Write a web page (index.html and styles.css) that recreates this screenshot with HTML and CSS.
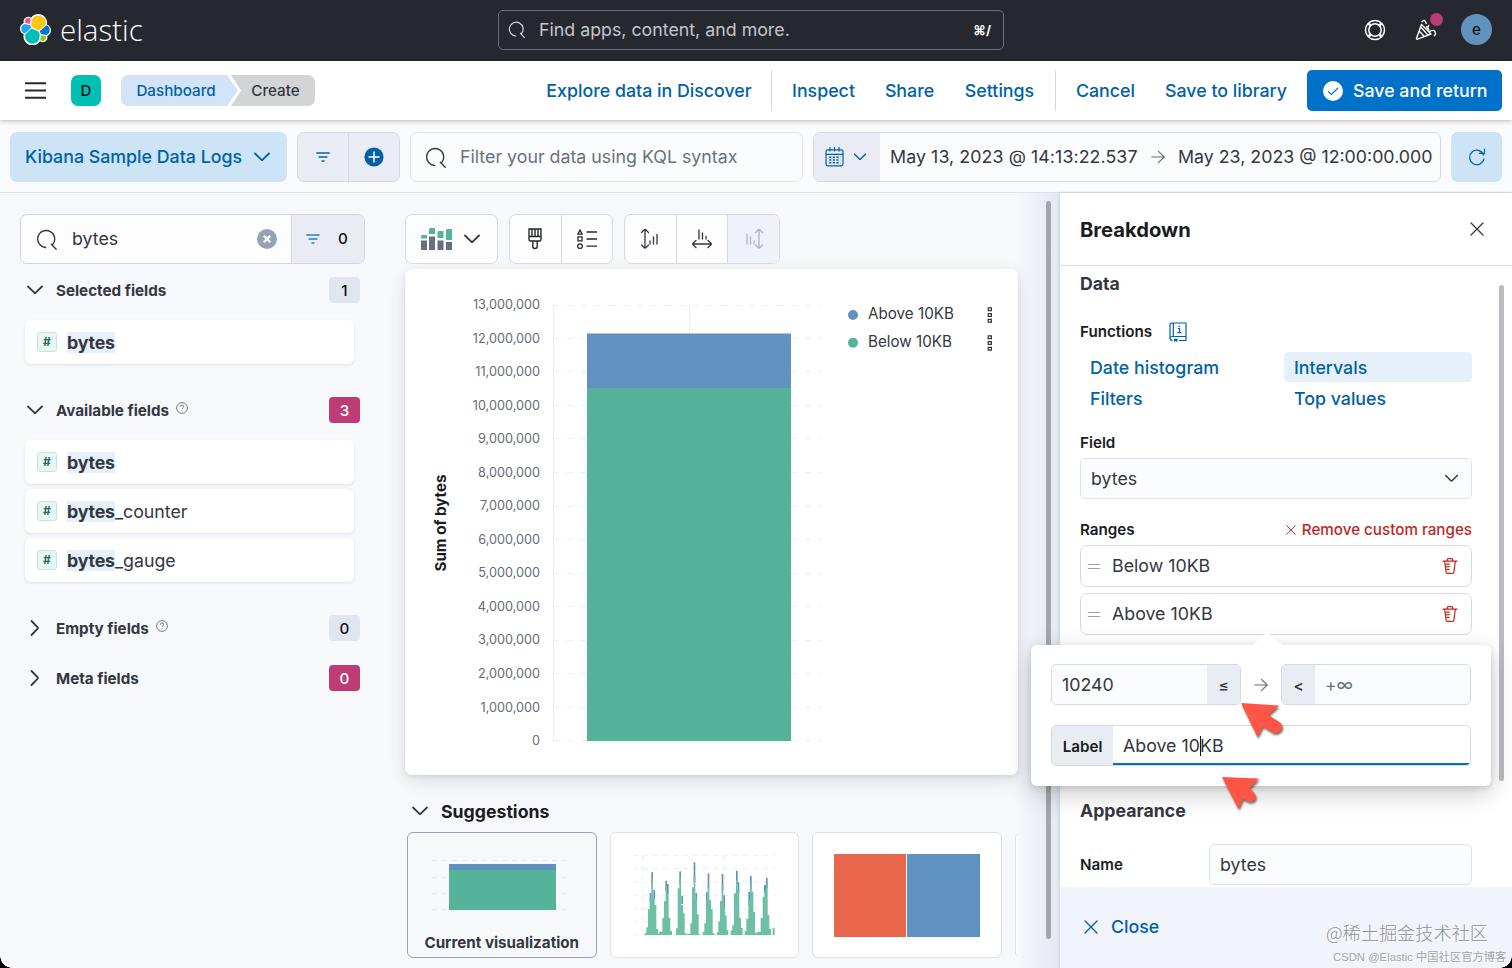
FILE: index.html
```html
<!DOCTYPE html>
<html lang="en">
<head>
<meta charset="utf-8">
<title>Create - Elastic</title>
<link rel="stylesheet" href="styles.css">
</head>
<body>
<svg class="defs" width="0" height="0">
  <symbol id="search" viewBox="0 0 20 20"><path d="M9.200 17.600A8.100 8.100 0 1 1 16 14.600M14.600 14.600l4.600 4.600" fill="none" stroke="currentColor" stroke-width="1.300" stroke-linecap="round"/></symbol>
  <symbol id="down" viewBox="0 0 18 18"><path d="M2 5.500l6.300 6.200q.7.6 1.400 0L16 5.500" fill="none" stroke="currentColor" stroke-width="1.800" stroke-linecap="round"/></symbol>
  <symbol id="right" viewBox="0 0 18 18"><path d="M5.500 2l6.200 6.300q.6.7 0 1.400L5.500 16" fill="none" stroke="currentColor" stroke-width="1.800" stroke-linecap="round"/></symbol>
  <symbol id="filter" viewBox="0 0 14 12"><path d="M.8 2h12.400M3 6h8M6 10h2" fill="none" stroke="currentColor" stroke-width="1.300" stroke-linecap="round"/></symbol>
  <symbol id="cross" viewBox="0 0 14 14"><path d="M1 1l12 12M13 1L1 13" fill="none" stroke="currentColor" stroke-width="1.300" stroke-linecap="round"/></symbol>
  <symbol id="arrow" viewBox="0 0 14 14"><path d="M.8 7H13M7.500 1.300L13.200 7l-5.700 5.700" fill="none" stroke="currentColor" stroke-width="1.200" stroke-linecap="round" stroke-linejoin="round"/></symbol>
  <symbol id="help" viewBox="0 0 12 12"><circle cx="6" cy="6" r="5.400" fill="none" stroke="currentColor" stroke-width=".9"/><path d="M4.300 4.700Q4.400 3 6 3t1.700 1.500Q7.700 5.300 6.900 5.800 6 6.300 6 7.200M6 8.300v1" fill="none" stroke="currentColor" stroke-width=".9"/></symbol>
  <symbol id="trash" viewBox="0 0 16 16"><path d="M1 3.200h14M5.300 3V1.700q0-1 1-1h3.400q1 0 1 1V3M2.700 3.500l1.400 10.600q.2 1.200 1.400 1.200h5q1.200 0 1.400-1.200l1.400-10.600M4.300 6.200h3M4.700 8.700h2.500M5 11.300h2.200" fill="none" stroke="currentColor" stroke-width="1.200" stroke-linecap="round"/></symbol>
  <symbol id="pointer" viewBox="0 0 44 38"><path d="M1 1l38 2.500-10.500 9.500 11.500 7.500c5 4 1 11.500-6.500 10.500L23 24.500 17.500 35z" fill="#ff5547"/></symbol>
  <symbol id="boxes" viewBox="0 0 6 16"><path d="M1.200.8h3.200v2.800H1.200zM1.200 6.600h3.200v2.800H1.200zM1.200 12.400h3.200v2.800H1.200z" fill="none" stroke="#343741" stroke-width="1.200"/></symbol>
</svg>

<header class="top">
  <div class="brand">
    <svg width="31" height="31" viewBox="0 0 32 32"><path fill="#fff" d="M32 16.770c0-2.680-1.660-5.020-4.160-5.930a8.900 8.900 0 0 0 .16-1.700C28 4.100 23.900 0 18.870 0c-2.940 0-5.660 1.400-7.390 3.770a4.800 4.800 0 0 0-2.950-1 4.860 4.860 0 0 0-4.570 6.500A6.360 6.360 0 0 0 0 15.200c0 2.700 1.680 5.040 4.170 5.950-.11.55-.17 1.120-.17 1.700A9.130 9.130 0 0 0 20.490 28.200c.84.65 1.870 1.010 2.940 1.010a4.860 4.860 0 0 0 4.570-6.500A6.370 6.370 0 0 0 32 16.770"/><path fill="#fff" d="M4 20.500A9.130 9.130 0 0 0 20.500 28z"/><path fill="#fec514" d="M12.580 13.787l7.002 3.211 7.066-6.213a7.849 7.849 0 0 0 .152-1.557c0-4.287-3.464-7.773-7.722-7.773a7.718 7.718 0 0 0-6.375 3.392l-1.180 6.120z"/><path fill="#00bfb3" d="M5.333 21.215A7.950 7.950 0 0 0 5.178 22.800c0 4.300 3.477 7.794 7.754 7.794a7.760 7.760 0 0 0 6.400-3.411l1.167-6.085-1.556-2.975-7.030-3.206z"/><path fill="#f04e98" d="M5.288 9.067l4.800 1.135L11.140 4.738a3.785 3.785 0 0 0-6.062 3.026c0 .451.08.889.21 1.303z"/><path fill="#1ba9f5" d="M4.872 10.211A5.386 5.386 0 0 0 1.310 15.264c0 2.252 1.390 4.262 3.478 5.053l6.733-6.096-1.236-2.644z"/><path fill="#93c90e" d="M20.870 27.182a3.762 3.762 0 0 0 2.284.785 3.790 3.790 0 0 0 3.581-5.032l-4.797-1.125z"/><path fill="#07c" d="M21.848 20.563l5.280 1.238a5.387 5.387 0 0 0 3.560-5.054 5.377 5.377 0 0 0-3.466-5.042l-6.906 6.060z"/></svg>
    <span class="wordmark">elastic</span>
  </div>
  <div class="global-search">
    <svg width="17" height="17"><use href="#search"/></svg>
    <span class="grow">Find apps, content, and more.</span>
    <b class="kbd">⌘/</b>
  </div>
  <div class="top-icons">
    <svg width="22" height="22" viewBox="0 0 22 22" fill="none" stroke="#fff" stroke-width="1.500"><circle cx="11" cy="11" r="9.500"/><circle cx="11" cy="11" r="6.200"/><path stroke-width="2.600" d="M4.700 4.700l2 2M17.300 4.700l-2 2M4.700 17.300l2-2M17.300 17.300l-2-2"/></svg>
    <div class="news">
      <svg width="22" height="22" viewBox="0 0 22 22" fill="none" stroke="#fff" stroke-width="1.400" stroke-linecap="round" stroke-linejoin="round"><path d="M6.500 5.500L1.500 19.300q-.1 1 1 .9L16 15zM4.700 12.500l4.500 5M6 8.300l7 7.800M7 2.700q3-3 4.200 1.800M12.500 9.500l1.200-3M14.500 12.500q6-3.300 6 2.700l-1 1.500M11.500 7.700l2.500 3"/></svg>
      <i class="dot"></i>
    </div>
    <span class="avatar">e</span>
  </div>
</header>

<nav class="bar">
  <svg width="21" height="17" viewBox="0 0 21 17"><path d="M0 1.300h21M0 8.500h21M0 15.700h21" stroke="#25282f" stroke-width="2.100"/></svg>
  <span class="space">D</span>
  <div class="crumbs"><span class="crumb first">Dashboard</span><span class="crumb last">Create</span></div>
  <span class="grow"></span>
  <div class="links">
    <a class="w-explore">Explore data in Discover</a><i class="rule"></i>
    <a class="w-inspect">Inspect</a><a class="w-share">Share</a><a class="w-settings">Settings</a><i class="rule"></i>
    <a class="w-cancel">Cancel</a><a class="w-library">Save to library</a>
  </div>
  <div class="save"><svg width="20" height="20" viewBox="0 0 20 20"><circle cx="10" cy="10" r="10" fill="#fff"/><path d="M5 10.200l3.300 3.300L15 7" fill="none" stroke="#0071c2" stroke-width="1.200"/></svg><span>Save and return</span></div>
</nav>

<section class="query">
  <div class="dataview"><span>Kibana Sample Data Logs</span><svg width="18" height="18"><use href="#down"/></svg></div>
  <div class="filters"><span><svg width="14" height="12"><use href="#filter"/></svg></span><span><svg width="20" height="20" viewBox="0 0 20 20"><circle cx="10" cy="10" r="9.600" fill="#0061a6"/><path d="M10 4.500v11M4.500 10h11" stroke="#fff" stroke-width="1.500"/></svg></span></div>
  <div class="kql"><svg width="21" height="21"><use href="#search"/></svg><span>Filter your data using KQL syntax</span></div>
  <div class="dates">
    <span class="quick"><svg width="19" height="20" viewBox="0 0 19 20" fill="none" stroke="#0061a6" stroke-width="1.200"><rect x="1" y="2.800" width="17" height="16" rx="1.800"/><path d="M1 7.300h17M5 0v4.500M9.500 0v4.500M14 0v4.500"/><path stroke-width="1.600" stroke-dasharray="2.200 1.400" d="M4.200 10.200h11M4.200 13h11M4.200 15.800h11"/></svg><svg width="14" height="14"><use href="#down"/></svg></span>
    <span class="from">May 13, 2023 @ 14:13:22.537</span>
    <svg class="to-arrow" width="14" height="14"><use href="#arrow"/></svg>
    <span class="to">May 23, 2023 @ 12:00:00.000</span>
  </div>
  <div class="refresh"><svg width="18" height="18" viewBox="0 0 18 18" fill="none" stroke="#0061a6" stroke-width="1.200"><path d="M15.800 7.500A7.200 7.200 0 1 0 16 10.500M11 5.300h5.500V.8"/></svg></div>
</section>

<main class="main">
  <aside class="fields">
    <div class="field-search">
      <svg width="21" height="21"><use href="#search"/></svg><span class="grow">bytes</span>
      <svg width="20" height="20" viewBox="0 0 20 20"><circle cx="10" cy="10" r="10" fill="#98a2b3"/><path d="M6.800 6.800l6.400 6.400M13.200 6.800l-6.400 6.400" stroke="#fff" stroke-width="2.300"/></svg>
      <div class="field-filter"><svg width="14" height="12"><use href="#filter"/></svg><b>0</b></div>
    </div>
    <div class="group g1"><svg width="18" height="18"><use href="#down"/></svg><h4>Selected fields</h4><span class="count">1</span></div>
    <div class="card"><i class="token">#</i><span><mark>bytes</mark></span></div>
    <div class="group g2"><svg width="18" height="18"><use href="#down"/></svg><h4>Available fields</h4><svg class="q" width="12" height="12"><use href="#help"/></svg><span class="count pink">3</span></div>
    <div class="card"><i class="token">#</i><span><mark>bytes</mark></span></div>
    <div class="card"><i class="token">#</i><span><mark>bytes</mark>_counter</span></div>
    <div class="card"><i class="token">#</i><span><mark>bytes</mark>_gauge</span></div>
    <div class="group g3"><svg width="18" height="18"><use href="#right"/></svg><h4>Empty fields</h4><svg class="q" width="12" height="12"><use href="#help"/></svg><span class="count">0</span></div>
    <div class="group g4"><svg width="18" height="18"><use href="#right"/></svg><h4>Meta fields</h4><span class="count pink">0</span></div>
  </aside>

  <section class="workspace">
    <div class="tools">
      <div class="tool chart-type">
        <svg width="32" height="24" viewBox="0 0 32 24"><path fill="#54b399" d="M1 9.500q0-1.500 1.500-1.500H7v3.500H1zM9 2.500Q9 1 10.500 1H15v6H9zM17.500 5.500q0-1.500 1.500-1.500h4.500v7h-6zM26 3.500Q26 2 27.500 2H32v11h-6z"/><path fill="#69707d" d="M1 13.500h6V23H1zM9 9.500h6V23H9zM17.500 13.500h6V23h-6zM26 15h6v8h-6z"/></svg>
        <svg width="18" height="18"><use href="#down"/></svg>
      </div>
      <div class="tool">
        <span><svg width="16" height="22" viewBox="0 0 16 22" fill="none" stroke="#25282f" stroke-width="1.400"><path d="M2 1h12v10.500q0 1.500-1.500 1.500h-9Q2 13 2 11.500zM2 8.500h12M5 1v7.500M8 1v7.500M11 1v7.500M5.800 13v5.500q0 2 2.200 2t2.200-2V13"/></svg></span>
        <span><svg width="20" height="20" viewBox="0 0 20 20" fill="none" stroke="#25282f" stroke-width="1.300"><path d="M3 1L.9 5.200h4.200zM1 7.900h4v4H1zM9.500 3H20M9.500 10H20M9.500 17.200H20"/><circle cx="3" cy="17.200" r="2.300"/></svg></span>
      </div>
      <div class="tool axes">
        <span><svg width="20" height="22" viewBox="0 0 20 22" fill="none" stroke="#343741" stroke-width="1.300" stroke-linecap="round"><path d="M5 1.500v18.500M1.500 4.500l2.500-2.500q1-1 2 0l2.500 2.500M1.500 17l2.500 2.500q1 1 2 0l2.500-2.500M10 16v-3M13.500 16v-7M17 16V6.500"/></svg></span>
        <span><svg width="22" height="20" viewBox="0 0 22 20" fill="none" stroke="#343741" stroke-width="1.300" stroke-linecap="round"><path d="M2 15h18M5 11.500L2 14.200q-.8.800 0 1.600L5 18.500M17 11.500l3 2.700q.8.800 0 1.600l-3 2.700M8 10V1M11.500 10V4M15 10V7.500"/></svg></span>
        <span class="off"><svg width="20" height="22" viewBox="0 0 20 22" fill="none" stroke="#abb4c4" stroke-width="1.300" stroke-linecap="round"><path d="M15 1.500v18.500M11.500 4.500L14 2q1-1 2 0l2.500 2.500M11.500 17l2.500 2.500q1 1 2 0l2.500-2.500M10 16v-3M6.500 16v-7M3 16V6.500"/></svg></span>
      </div>
    </div>

    <div class="chart">
      <svg width="613" height="506" viewBox="0 0 613 506">
        <path d="M148 36.500h269M148 69.500h269M148 102.500h269M148 136.500h269M148 169.500h269M148 203.500h269M148 237.500h269M148 270.500h269M148 304.500h269M148 337.500h269M148 371.500h269M148 404.500h269M148 438.500h269M148 471.500h269" stroke="#e9ecf1" stroke-dasharray="6 8"/>
        <path d="M148.500 36v436M284.500 36v29" stroke="#eaecf1" fill="none"/>
        <rect x="182" y="64.500" width="204" height="55" fill="#6092c0"/>
        <rect x="182" y="119" width="204" height="353" fill="#54b399"/>
        <g class="ticks" text-anchor="end">
          <text x="135" y="40">13,000,000</text><text x="135" y="73.500">12,000,000</text><text x="135" y="107">11,000,000</text><text x="135" y="140.600">10,000,000</text><text x="135" y="174">9,000,000</text><text x="135" y="207.700">8,000,000</text><text x="135" y="241">7,000,000</text><text x="135" y="274.700">6,000,000</text><text x="135" y="308.400">5,000,000</text><text x="135" y="341.800">4,000,000</text><text x="135" y="375.400">3,000,000</text><text x="135" y="409">2,000,000</text><text x="135" y="442.500">1,000,000</text><text x="135" y="476">0</text>
        </g>
        <text class="axis-title" transform="translate(41 254) rotate(-90)" text-anchor="middle">Sum of bytes</text>
        <circle cx="448" cy="46" r="5" fill="#6092c0"/><circle cx="448" cy="73.700" r="5" fill="#54b399"/>
        <text class="legend" x="463" y="50">Above 10KB</text><text class="legend" x="463" y="78">Below 10KB</text>
        <use href="#boxes" x="582" y="38" width="6" height="16"/><use href="#boxes" x="582" y="66" width="6" height="16"/>
      </svg>
    </div>

    <div class="sugg-title"><svg width="18" height="18"><use href="#down"/></svg><h3>Suggestions</h3></div>
    <div class="suggestions">
      <div class="sugg current">
        <svg width="140" height="56" viewBox="0 0 140 56"><path d="M0 4.500h140M0 21.500h140M0 37.500h140M0 53.500h140" stroke="#e6eaf0" stroke-dasharray="5 5"/><rect x="17" y="8" width="107" height="46" fill="#54b399"/><rect x="17" y="8" width="107" height="6" fill="#6092c0"/></svg>
        <b>Current visualization</b>
      </div>
      <div class="sugg">
        <svg width="142" height="84" viewBox="700 222 426 252"><path d="M700 227h426M700 266h426M700 306h426M700 346h426M700 386h426M700 425h426M700 465h426M729 227v238M974 227v238" stroke="#e9ecf1" stroke-width="3" stroke-dasharray="15 15" fill="none"/>
          <g fill="#6092c0"><path d="M755 277h5v40h-5zM750 339h5v30h-5zM761 330h5v30h-5zM797 302h5v30h-5zM802 312h5v30h-5zM839 274h5v40h-5zM845 347h5v25h-5zM882 247h5v60h-5zM887 339h5v20h-5zM924 280h5v45h-5zM919 337h5v30h-5zM966 282h5v50h-5zM971 346h5v35h-5zM1009 272h5v40h-5zM1014 307h5v30h-5zM1051 288h5v40h-5zM1046 336h5v40h-5zM1099 294h5v30h-5zM1093 315h6v25h-6z"/></g>
          <g fill="#6dbfa5"><path d="M735 465v-5h5v-18h5v-54h5v-35h5v-60h5v60h5v22h5v72h5v14h5v4z"/><path d="M778 465v-10h10v-41h5v-51h5v-45h4v20h5v75h5v40h5v12z"/><path d="M829 465v-20h5v-120h5v-30h5v80h6v25h5v60h5v5z"/><path d="M862 465v-4h10v-31h5v-108h5v-35h5v73h5v43h5v60h5v2z"/><path d="M909 465v-10h5v-25h5v-70h5v-45h5v45h5v27h5v73h5v5z"/><path d="M951 465v-8h5v-33h5v-61h5v-45h5v60h5v28h5v44h5v15z"/><path d="M993 465v-14h5v-15h5v-96h6v-40h5v30h5v84h5v30h5v21z"/><path d="M1035 465v-12h5v-37h6v-56h5v-45h5v20h5v61h5v62h5v7z"/><path d="M1071 465v-9h12v-42h6v-64h5v-20h5v-15h5v90h5v42h5v18zM1119 465v-22h6v22z"/></g>
        </svg>
      </div>
      <div class="sugg split"><i class="tile red"></i><i class="tile blue"></i></div>
      <div class="sugg"></div>
    </div>
    <i class="scroll"></i>
  </section>

  <aside class="flyout">
    <div class="fly-head"><h2>Breakdown</h2><svg width="14" height="14"><use href="#cross"/></svg></div>
    <div class="fly-body">
      <h3 class="data">Data</h3>
      <div class="label functions"><span>Functions</span><svg width="18" height="20" viewBox="0 0 18 20" fill="none" stroke="#0061a6" stroke-width="1.200"><path d="M3.300 1H17v13.500H3.300M3.300 1Q1 1 1 3v13q0 2.300 2.500 2.300M1 16q.3-1.500 2.300-1.500M10 18.500h7v-4M4.300 1v13.500"/><path d="M8.700 6.500h1.800v4M8.400 10.700h4M9.500 4.300h1.500"/><path d="M5 16.800h3.500V20L6.700 19 5 20z" fill="#0061a6" stroke="none"/></svg></div>
      <div class="fn-grid"><a>Date histogram</a><a class="picked">Intervals</a><a>Filters</a><a>Top values</a></div>
      <div class="label field">Field</div>
      <div class="select"><span>bytes</span><svg width="15" height="15"><use href="#down"/></svg></div>
      <div class="label ranges"><span>Ranges</span><span class="remove"><svg width="10" height="10"><use href="#cross"/></svg>Remove custom ranges</span></div>
      <div class="range"><i class="grab"></i><span class="grow">Below 10KB</span><svg width="16" height="16"><use href="#trash"/></svg></div>
      <div class="range"><i class="grab"></i><span class="grow">Above 10KB</span><svg width="16" height="16"><use href="#trash"/></svg></div>
      <h3 class="appearance">Appearance</h3>
      <div class="name-row"><span class="label">Name</span><span class="input">bytes</span></div>
      <i class="fly-scroll"></i>
    </div>
    <div class="fly-foot"><svg width="14" height="14"><use href="#cross"/></svg><span>Close</span></div>
  </aside>
</main>

<div class="popover">
  <i class="tip"></i>
  <div class="pop-row">
    <div class="num"><span class="grow">10240</span><b>≤</b></div>
    <svg width="14" height="14"><use href="#arrow"/></svg>
    <div class="num upper"><b>&lt;</b><span class="inf">+∞</span></div>
  </div>
  <div class="label-input"><b>Label</b><span>Above 10<i class="caret"></i>KB</span></div>
</div>
<svg class="pointer p1" width="44" height="38"><use href="#pointer"/></svg>
<svg class="pointer p2" width="38" height="38" viewBox="0 0 38 38"><path d="M1 1l37 1.500-9.500 9.500 5 5.500c4 5-1 9.500-6 8l-5.500-2.500L17.500 33z" fill="#ff5547"/></svg>
<div class="mark1">@稀土掘金技术社区</div>
<div class="mark2">CSDN @Elastic 中国社区官方博客</div>
<i class="corner left"></i><i class="corner right"></i>
</body>
</html>
```
FILE: styles.css
```css
* { box-sizing: border-box; }
body { margin: 0; width: 1512px; height: 968px; overflow: hidden; position: relative; display: flex; flex-direction: column; background: #f6f8fc; color: #343741; font: 400 17.8px/24px Inter, "Liberation Sans", sans-serif; letter-spacing: 0; white-space: nowrap; }
svg { display: block; flex: none; }
h2, h3, h4 { margin: 0; font-weight: 700; }
i { font-style: normal; }
.defs { position: absolute; }
.grow { flex: 1; }

.top { height: 61px; flex: none; background: #25282f; display: flex; align-items: center; padding-bottom: 2px; }
.brand { width: 498px; padding-left: 20px; display: flex; align-items: center; gap: 9px; }
.wordmark { color: #fff; font: 300 29.5px/30px "Open Sans", "Noto Sans", sans-serif; }
.global-search { width: 506px; height: 40px; border: 1px solid #6c6f77; border-radius: 5px; display: flex; align-items: center; padding: 0 12px 0 9px; gap: 14px; color: #c3c5ca; }
.global-search svg { color: #dfe1e6; }
.kbd { color: #fff; font-size: 13px; }
.top-icons { display: flex; align-items: center; padding-left: 360px; }
.news { position: relative; margin-left: 29px; }
.dot { position: absolute; left: 15px; top: -6px; width: 13px; height: 13px; border-radius: 50%; background: #bd3c74; }
.avatar { margin-left: 24px; width: 31px; height: 31px; border-radius: 50%; background: #6092c0; color: #111; text-align: center; font-weight: 500; font-size: 15px; line-height: 31px; }

.bar { height: 59px; flex: none; background: #fff; display: flex; align-items: center; padding: 0 10px 0 25px; position: relative; z-index: 2; box-shadow: 0 1px 4px rgba(0,0,0,.22), 0 3px 8px rgba(0,0,0,.05); }
.space { margin-left: 25px; width: 30px; height: 31px; border-radius: 7px; background: #00bfb3; color: #111; text-align: center; line-height: 31px; font-weight: 500; font-size: 15px; }
.crumbs { margin-left: 20px; display: flex; font-size: 15.200px; font-weight: 500; line-height: 31px; }
.crumb { height: 31px; text-align: center; }
.first { width: 117px; padding-right: 7px; background: #d3e3f8; color: #0061a6; border-radius: 7px 0 0 7px; clip-path: polygon(0 0, 106px 0, 100% 50%, 106px 100%, 0 100%); }
.last { width: 84px; margin-left: -7px; padding-left: 5px; background: #d3d4d6; border-radius: 0 7px 7px 0; clip-path: polygon(0 0, 100% 0, 100% 100%, 0 100%, 10px 50%); }
.links { display: flex; align-items: center; color: #0061a6; font-weight: 500; margin-right: 20px; }
.links a { display: flex; justify-content: center; }
.w-explore { width: 204px; margin-right: 20px; }
.w-inspect { width: 63px; margin: 0 30px 0 20px; }
.w-share { width: 49px; margin-right: 30px; }
.w-settings { width: 71px; margin-right: 20px; }
.w-cancel { width: 59px; margin: 0 30px 0 20px; }
.w-library { width: 122px; }
.rule { width: 1px; height: 41px; background: #d3dae6; }
.save { width: 195px; height: 41px; border-radius: 5px; background: #0071c9; color: #fff; font-weight: 500; display: flex; align-items: center; padding-left: 16px; gap: 10px; }

.query { height: 73px; flex: none; border-bottom: 1px solid #dde1ea; background: #f9fbfd; display: flex; align-items: flex-start; padding: 12px 10px 0; gap: 10px; }
.query > div { height: 50px; display: flex; align-items: center; border-radius: 7px; }
.query .dataview { width: 277px; background: #cce4f5; color: #0061a6; font-weight: 500; padding-left: 15px; gap: 11px; }
.query .filters { width: 103px; background: #e9edf3; border: 1px solid #d3dae6; color: #0061a6; }
.filters span { flex: 1; height: 100%; display: grid; place-items: center; }
.filters span + span { border-left: 1px solid #d3dae6; }
.query .kql { width: 393px; border: 1px solid #dfe4ec; background: #fbfcfd; color: #6a717d; padding-left: 14px; gap: 14px; }
.kql svg { color: #343741; }
.query .dates { width: 628px; border: 1px solid #d3dae6; background: #fbfcfd; overflow: hidden; }
.quick { width: 66px; height: 100%; background: #e9edf3; color: #0061a6; display: flex; align-items: center; gap: 9px; padding-left: 11px; }
.from { width: 247px; margin-left: 10px; letter-spacing: .08px; }
.to-arrow { margin: 0 13px 0 14px; color: #69707d; }
.to { width: 252px; }
.query .refresh { width: 51px; background: #cce4f5; justify-content: center; }

.main { flex: 1; min-height: 0; display: flex; }
.fields { width: 385px; padding: 21px 20px 0; }
.field-search { height: 50px; width: 345px; border: 1px solid #cfd6e1; border-radius: 7px; background: #fdfdfe; display: flex; align-items: center; padding-left: 15px; overflow: hidden; }
.field-search > .grow { padding-left: 15px; }
.field-filter { margin-left: 14px; width: 73px; height: 100%; border-left: 1px solid #d3dae6; background: #e9edf3; color: #2a7cc0; display: flex; align-items: center; padding-left: 14px; gap: 18px; }
.field-filter b { color: #111; font-weight: 500; font-size: 15.200px; }
.group { display: flex; align-items: center; height: 26px; padding: 0 5px 0 6px; width: 345px; }
.group h4 { font-size: 15.200px; margin-left: 12px; font-weight: 650; padding-top: 1px; }
.q { margin: -4px 0 0 7px; color: #69707d; }
.count { margin-left: auto; width: 31px; height: 26px; border-radius: 4px; background: #e0e5ee; color: #111; text-align: center; font-size: 15.200px; font-weight: 500; line-height: 27px; }
.pink { background: #bd3c74; color: #fff; }
.g1 { margin: 13px 0 17px; }
.g2 { margin: 33px 0 17px; }
.g3 { margin: 33px 0 24px; }
.card { width: 329px; height: 44px; margin: 0 0 5px 5px; background: #fff; border-radius: 6px; box-shadow: 0 1px 3px rgba(60,70,90,.13); display: flex; align-items: center; padding-left: 12px; gap: 10px; }
.card span { padding-top: 1px; }
.token { width: 20px; height: 20px; border: 1px solid #c3e6db; border-radius: 3px; background: #e9f6f2; color: #20705a; font-size: 12px; font-weight: 700; line-height: 18px; text-align: center; }
mark { background: #e6f0fa; color: inherit; font-weight: 700; padding: 0; letter-spacing: -0.01em; }

.workspace { width: 675px; position: relative; padding: 21px 0 0 20px; background: linear-gradient(90deg, rgba(200,208,220,0) 630px, rgba(200,208,220,.4) 675px); }
.tools { display: flex; gap: 11px; height: 50px; }
.tool { border: 1px solid #d3dae6; border-radius: 7px; background: #fdfdfe; display: flex; overflow: hidden; width: 104px; }
.tool span { flex: 1; display: grid; place-items: center; }
.tool span + span { border-left: 1px solid #d3dae6; }
.chart-type { width: 93px; align-items: center; padding-left: 14px; gap: 11px; }
.axes { width: 156px; }
.off { background: #eff2f9; }
.chart { margin-top: 5px; width: 613px; height: 506px; border-radius: 7px; background: #fff; box-shadow: 0 2px 5px rgba(0,0,0,.08), 0 6px 18px rgba(0,0,0,.10); }
.ticks { font-size: 12.700px; fill: #646a76; }
.axis-title { font-size: 15.100px; font-weight: 700; fill: #1a1c21; }
.legend { font-size: 15.200px; fill: #343741; }
.sugg-title { display: flex; align-items: center; height: 24px; margin: 24px 0 0 6px; gap: 12px; }
.sugg-title h3 { font-size: 17.700px; font-weight: 650; color: #1a1c21; padding-top: 1px; }
.suggestions { display: flex; gap: 13px; width: 611px; margin: 9px 0 0 2px; overflow: hidden; }
.sugg { flex: none; width: 189.500px; height: 126px; border: 1px solid #dce1ea; border-radius: 6px; background: #fff; display: flex; justify-content: center; padding-top: 21px; }
.current { flex-direction: column; align-items: center; justify-content: flex-start; padding-top: 23px; background: #f6f8fc; border-color: #98a2b3; }
.current b { font-size: 15.200px; font-weight: 650; margin-top: 19px; }
.split { gap: 1px; }
.tile { width: 72.500px; height: 83px; }
.red { background: #e7664c; }
.blue { background: #6092c0; }
.scroll { position: absolute; left: 661px; top: 8px; width: 5px; height: 738px; border-radius: 3px; background: #a3a6aa; }

.flyout { width: 452px; display: flex; flex-direction: column; background: #fff; box-shadow: -1px 0 3px rgba(0,0,0,.14); }
.fly-head { height: 73px; border-bottom: 1px solid #d3dae6; padding: 0 28px 0 20px; display: flex; align-items: center; justify-content: space-between; }
.fly-head h2 { font-size: 20.200px; color: #1a1c21; padding-top: 1px; }
.fly-body { flex: 1; position: relative; min-height: 0; padding: 6px 40px 0 20px; }
.fly-body h3 { font-size: 17.700px; font-weight: 650; height: 24px; }
.label { font-size: 15.200px; font-weight: 600; color: #1a1c21; height: 24px; }
.functions { margin-top: 24px; display: flex; align-items: center; gap: 17px; }
.fn-grid { margin-top: 8px; display: grid; grid-template-columns: 188px 188px; column-gap: 16px; grid-auto-rows: 31px; color: #0061a6; font-weight: 500; }
.fn-grid a { height: 30px; line-height: 31px; padding-left: 10px; border-radius: 5px; }
.picked { background: #e6f0fa; }
.field { margin-top: 17px; }
.select { height: 41px; margin-top: 3px; border: 1px solid #dfe3ec; border-radius: 5px; background: #fbfcfd; display: flex; align-items: center; justify-content: space-between; padding: 0 12px 0 10px; }
.select span { padding-top: 1px; }
.ranges { margin: 19px 0 3px; display: flex; justify-content: space-between; }
.remove { color: #bd271e; font-weight: 500; display: flex; align-items: center; gap: 6px; }
.range { height: 42px; border: 1px solid #d3dae6; border-radius: 7px; margin-bottom: 6px; display: flex; align-items: center; padding: 0 13px 0 7px; }
.range svg { color: #bd271e; }
.grab { width: 12px; height: 5px; border: solid #98a2b3; border-width: 1.500px 0; margin-right: 12px; }
.appearance { margin-top: 164px; }
.name-row { margin-top: 21px; display: flex; align-items: center; justify-content: space-between; }
.input { width: 263px; height: 41px; border: 1px solid #dfe3ec; border-radius: 5px; background: #fbfcfd; line-height: 39px; padding-left: 10px; }
.fly-scroll { position: absolute; right: 8px; top: 19px; width: 5px; height: 496px; border-radius: 3px; background: #b9bbbe; }
.fly-foot { height: 81px; background: #f2f4fb; color: #0061a6; font-weight: 500; display: flex; align-items: center; padding: 0 0 1px 24px; gap: 13px; }

.popover { position: absolute; z-index: 5; left: 1031px; top: 645px; width: 460px; height: 140.500px; border-radius: 6px; background: #fff; box-shadow: 0 2px 6px rgba(0,0,0,.12), 0 8px 26px rgba(0,0,0,.20); padding: 19px 20px 0; }
.tip { position: absolute; left: 221px; top: -13px; width: 31px; height: 14px; background: #fff; clip-path: polygon(50% 0, 100% 100%, 0 100%); }
.pop-row { display: flex; justify-content: space-between; align-items: center; }
.pop-row svg { color: #69707d; }
.num { width: 190px; height: 41px; border: 1px solid #d3dae6; border-radius: 5px; background: #fbfcfd; display: flex; align-items: center; padding-left: 10px; overflow: hidden; }
.num b { width: 33px; height: 39px; background: #e9edf3; text-align: center; line-height: 42px; font-size: 15.200px; font-weight: 600; }
.upper { padding-left: 0; }
.inf { padding-left: 10px; color: #69707d; font-size: 17.500px; }
.label-input { margin-top: 20px; height: 41px; border: 1px solid #d3dae6; border-radius: 5px; display: flex; overflow: hidden; }
.label-input b { width: 61px; background: #e9edf3; color: #1a1c21; font-size: 15.200px; font-weight: 600; text-align: center; line-height: 41px; }
.label-input span { flex: 1; border-bottom: 2.500px solid #0071c2; padding-left: 10px; line-height: 39px; }
.caret { display: inline-block; width: 1px; height: 20px; margin-right: -1px; background: #111; vertical-align: -4px; }
.pointer { position: absolute; z-index: 6; filter: drop-shadow(1px 2px 1px rgba(60,50,30,.7)); }
.p1 { left: 1240px; top: 702px; }
.p2 { left: 1221px; top: 776px; }
.mark1, .mark2 { position: absolute; z-index: 7; text-shadow: 1px 1px 0 #fff; }
.mark1 { left: 1326px; top: 920px; font: 300 18.200px/24px "Noto Sans CJK SC", sans-serif; color: #8d9097; }
.mark2 { left: 1333px; top: 948px; font: 400 11.300px/18px "Liberation Sans", "Noto Sans CJK SC", sans-serif; color: #a1a4ab; }
.corner { position: absolute; z-index: 8; bottom: 0; width: 12px; height: 12px; }
.left { left: 0; background: radial-gradient(circle at 100% 0, transparent 11.500px, #000 12px); }
.right { right: 0; background: radial-gradient(circle at 0 0, transparent 11.500px, #000 12px); }
```
